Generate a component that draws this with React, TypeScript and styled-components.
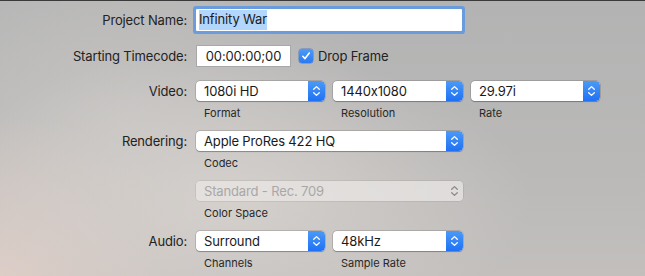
import React from "react";
import styled, { createGlobalStyle } from "styled-components";

const Global = createGlobalStyle`
  html, body { margin: 0; padding: 0; }
  body {
    font-family: Inter, "Noto Sans", "Liberation Sans", sans-serif;
    font-feature-settings: "calt" 0;
    -webkit-font-smoothing: antialiased;
  }
`;

const Page = styled.div`
  width: 645px;
  height: 276px;
  box-sizing: border-box;
  overflow: hidden;
  border-top: 1px solid #3a3a3a;
  padding-top: 7px;
  display: flex;
  flex-direction: column;
  background:
    radial-gradient(ellipse 300px 150px at 230px 200px, rgba(214, 209, 205, 0.95), rgba(214, 209, 205, 0) 100%),
    radial-gradient(ellipse 220px 160px at 0px 276px, rgba(222, 205, 198, 1), rgba(222, 205, 198, 0) 100%),
    radial-gradient(ellipse 260px 200px at 120px 120px, rgba(200, 198, 196, 0.8), rgba(200, 198, 196, 0) 100%),
    linear-gradient(180deg, #b3b3b3 0%, #bab9b8 60%, #c2bfbd 100%);
  color: #222;
  font-size: 13px;
  letter-spacing: -0.15px;
`;

const Row = styled.div<{ $mt: number }>`
  display: grid;
  grid-template-columns: 187px 1fr;
  column-gap: 9px;
  margin-top: ${(p) => p.$mt}px;
`;

const Label = styled.div<{ $h: number }>`
  text-align: right;
  height: ${(p) => p.$h}px;
  line-height: ${(p) => p.$h}px;
  color: #222;
  white-space: nowrap;
`;

const Controls = styled.div`
  display: flex;
  align-items: flex-start;
  gap: 8px;
`;

const FocusField = styled.div`
  width: 266px;
  height: 22px;
  box-sizing: border-box;
  background: #fff;
  border-radius: 1px;
  box-shadow: 0 0 0 3px rgba(92, 150, 228, 0.85);
  display: flex;
  align-items: center;
  padding-left: 3px;
`;

const Selected = styled.span`
  background: #b3d6fd;
  padding: 1px 0 2px;
  line-height: 17px;
  color: #1a1a1a;
`;

const TimeField = styled.div`
  width: 95px;
  height: 22px;
  box-sizing: border-box;
  background: #fff;
  border: 1px solid #a8a8a8;
  display: flex;
  align-items: center;
  justify-content: center;
  color: #1a1a1a;
`;

const CheckWrap = styled.label`
  display: flex;
  align-items: center;
  gap: 5px;
  height: 22px;
  color: #222;
`;

const CheckBox = styled.span`
  width: 14px;
  height: 14px;
  border-radius: 3px;
  background: linear-gradient(180deg, #4c9bf9 0%, #2a79f3 100%);
  display: flex;
  align-items: center;
  justify-content: center;
  box-shadow: 0 0 0 0.5px rgba(30, 90, 200, 0.6);
`;

const Group = styled.div`
  display: flex;
  flex-direction: column;
`;

const SelectBox = styled.div<{ $w: number; $disabled?: boolean }>`
  width: ${(p) => p.$w}px;
  height: 20px;
  box-sizing: border-box;
  border-radius: 4px;
  background: ${(p) => (p.$disabled ? "rgba(232, 230, 228, 0.75)" : "#fff")};
  box-shadow: ${(p) =>
    p.$disabled
      ? "0 0 0 0.5px rgba(0,0,0,0.12)"
      : "0 0 0 0.5px rgba(0,0,0,0.22), 0 0.5px 1px rgba(0,0,0,0.25)"};
  display: flex;
  align-items: center;
  overflow: hidden;
`;

const SelectText = styled.span<{ $disabled?: boolean }>`
  flex: 1;
  padding-left: 8px;
  color: ${(p) => (p.$disabled ? "#a9a7a6" : "#1a1a1a")};
  white-space: nowrap;
`;

const Stepper = styled.span<{ $disabled?: boolean }>`
  width: 17px;
  height: 20px;
  flex: none;
  display: flex;
  align-items: center;
  justify-content: center;
  background: ${(p) =>
    p.$disabled ? "transparent" : "linear-gradient(180deg, #4b9af8 0%, #1f71f4 100%)"};
  border-radius: 0 4px 4px 0;
`;

const Sub = styled.div`
  margin-top: 5px;
  height: 14px;
  line-height: 14px;
  font-size: 11px;
  letter-spacing: 0;
  padding-left: 8px;
  color: #282828;
  white-space: nowrap;
`;

const Chevrons = ({ color }: { color: string }) => (
  <svg width="17" height="20" viewBox="0 0 17 20">
    <path
      d="M5.7 8.3 L8.5 5.6 L11.3 8.3 M5.7 11.7 L8.5 14.4 L11.3 11.7"
      fill="none"
      stroke={color}
      strokeWidth="1.3"
      strokeLinecap="round"
      strokeLinejoin="round"
    />
  </svg>
);

const Select = ({ value, w, disabled }: { value: string; w: number; disabled?: boolean }) => (
  <SelectBox $w={w} $disabled={disabled}>
    <SelectText $disabled={disabled}>{value}</SelectText>
    <Stepper $disabled={disabled}>
      <Chevrons color={disabled ? "#8c8a89" : "#ffffff"} />
    </Stepper>
  </SelectBox>
);

const SelectGroup = ({ value, w, sub, disabled }: { value: string; w: number; sub: string; disabled?: boolean }) => (
  <Group>
    <Select value={value} w={w} disabled={disabled} />
    <Sub>{sub}</Sub>
  </Group>
);

export default function App() {
  return (
    <Page>
      <Global />
      <Row $mt={1}>
        <Label $h={22}>Project Name:</Label>
        <Controls>
          <FocusField>
            <Selected>Infinity War</Selected>
          </FocusField>
        </Controls>
      </Row>
      <Row $mt={14}>
        <Label $h={22}>Starting Timecode:</Label>
        <Controls>
          <TimeField>00:00:00;00</TimeField>
          <CheckWrap>
            <CheckBox>
              <svg width="10" height="10" viewBox="0 0 10 10">
                <path d="M1.8 5.3 L4 7.6 L8.3 2" fill="none" stroke="#fff" strokeWidth="1.6" strokeLinecap="round" strokeLinejoin="round" />
              </svg>
            </CheckBox>
            Drop Frame
          </CheckWrap>
        </Controls>
      </Row>
      <Row $mt={14}>
        <Label $h={20}>Video:</Label>
        <Controls>
          <SelectGroup value="1080i HD" w={129} sub="Format" />
          <SelectGroup value="1440x1080" w={130} sub="Resolution" />
          <SelectGroup value="29.97i" w={129} sub="Rate" />
        </Controls>
      </Row>
      <Row $mt={11}>
        <Label $h={20}>Rendering:</Label>
        <Controls>
          <SelectGroup value="Apple ProRes 422 HQ" w={267} sub="Codec" />
        </Controls>
      </Row>
      <Row $mt={11}>
        <Label $h={20}></Label>
        <Controls>
          <SelectGroup value="Standard - Rec. 709" w={267} sub="Color Space" disabled />
        </Controls>
      </Row>
      <Row $mt={11}>
        <Label $h={20}>Audio:</Label>
        <Controls>
          <SelectGroup value="Surround" w={129} sub="Channels" />
          <SelectGroup value="48kHz" w={130} sub="Sample Rate" />
        </Controls>
      </Row>
    </Page>
  );
}
